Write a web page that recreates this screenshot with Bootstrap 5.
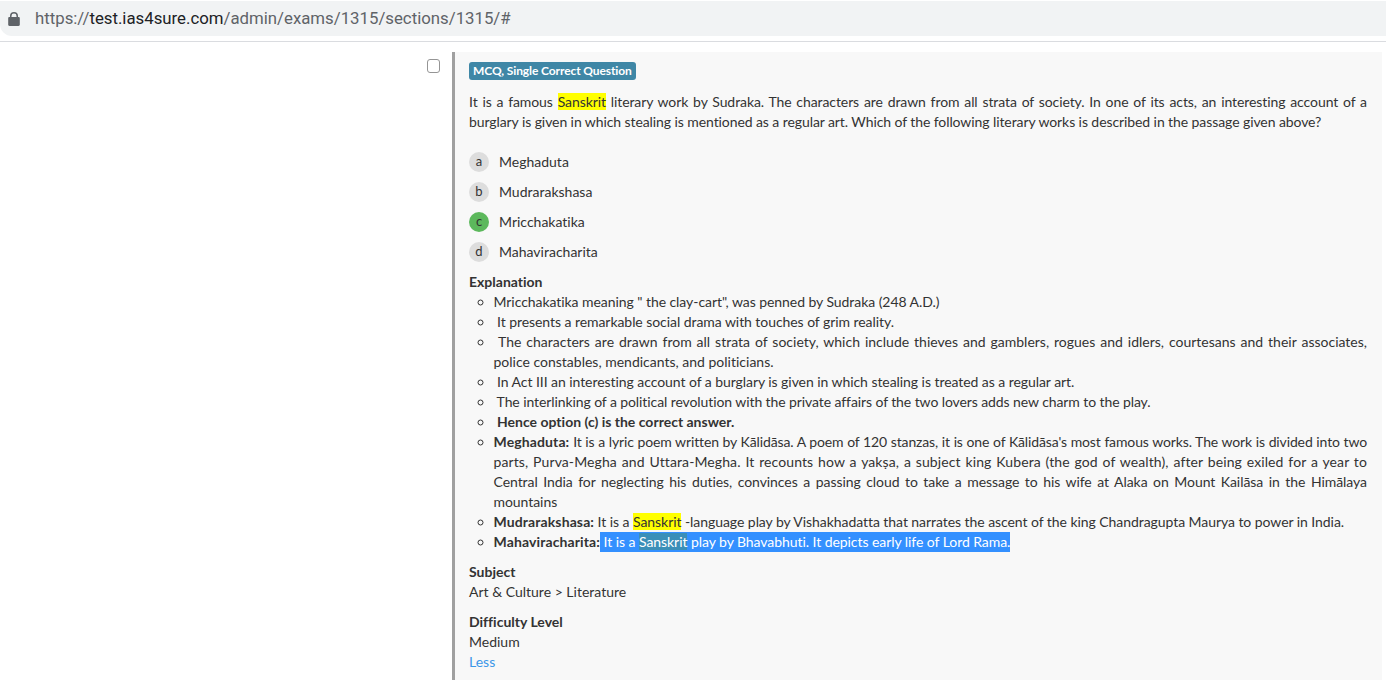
<!DOCTYPE html>
<html lang="en">
<head>
<meta charset="utf-8">
<title>Question</title>
<link rel="stylesheet" href="https://cdn.jsdelivr.net/npm/bootstrap@5.3.0/dist/css/bootstrap.min.css">
<style>
html, body { height: 680px; overflow: hidden; background: #fff; }
body { font-family: Lato, "Liberation Sans", sans-serif; font-size: 14px; line-height: 20px; color: #333; font-variant-ligatures: none; }
.url-bar { height: 35px; margin-top: 1px; background: #f1f3f4; border-radius: 0 0 0 12px; padding-left: 8px; margin-bottom: 5px; }
.url-text { font-family: Roboto, "Liberation Sans", sans-serif; font-size: 16.8px; color: #5f6368; margin-left: 15px; line-height: 35px; }
.url-host { color: #202124; }
.url-rule { height: 1px; background: #dadce0; }
.stage { padding-top: 10px; padding-right: 4px; }
.check-col { width: 452px; flex: none; }
.fake-check { width: 13px; height: 14px; border: 1.5px solid #959595; border-radius: 3px; background: #fff; margin: 7px 12px 0 0; }
.panel-q { background: #f8f8f8; border-left: 3px solid #a0a0a0; flex: 1; padding: 10px 15px 10px 14px; height: 640px; }
.tag-q { background: #3f87a6; color: #fff; font-weight: 700; font-size: 12px; line-height: 18px; height: 18px; border-radius: 3px; padding: 0 4px; display: block; width: fit-content; letter-spacing: -.1px; }
.stem { text-align: justify; margin: 12px 0 20px; letter-spacing: -.085px; }
.opt { height: 30px; }
.opt-dot { width: 20px; height: 20px; border-radius: 50%; background: #ddd; font-size: 13px; text-align: center; line-height: 19px; margin-right: 10px; }
.opt-ok { background: #5cb85c; }
.expl { margin: 0 0 10px; padding-left: 24.5px; list-style: circle; text-align: justify; letter-spacing: -.06px; }
.expl strong { letter-spacing: 0; }
.expl .lbl { letter-spacing: .12px; }
.expl .li-wide { letter-spacing: 0; }
.expl .li-tight { letter-spacing: -.13px; }
.expl .li-snug { letter-spacing: -.09px; }
.expl .li-loose { letter-spacing: .1px; }
.hl { background: #ff0; }
.sel { background: #3390ff; color: #fff; display: inline-block; height: 20px; }
.sel-y { background: #3b8fb8; }
.group-head { font-weight: 700; }
.group-block { margin-bottom: 10px; }
.less-link { color: #3c97e8; text-decoration: none; }
</style>
</head>
<body>
<div class="url-bar d-flex align-items-center">
  <svg width="12" height="14" viewBox="0 0 12 14" aria-hidden="true"><path fill="#5f6368" d="M2 5V3.900a4 3.900 0 0 1 8 0V5h.5c.8 0 1.300.5 1.300 1.200v6.500c0 .7-.5 1.200-1.300 1.200h-9C.7 13.900.2 13.400.2 12.700V6.200C.2 5.500.7 5 1.500 5zm1.500 0h5V3.900a2.500 2.400 0 0 0-5 0z"/></svg>
  <span class="url-text">https://<span class="url-host">test.ias4sure.com</span>/admin/exams/1315/sections/1315/#</span>
</div>
<div class="url-rule"></div>
<div class="stage d-flex">
  <div class="check-col d-flex justify-content-end align-items-start"><div class="fake-check"></div></div>
  <div class="panel-q">
    <span class="tag-q">MCQ, Single Correct Question</span>
    <p class="stem">It is a famous <span class="hl">Sanskrit</span> literary work by Sudraka. The characters are drawn from all strata of society. In one of its acts, an interesting account of a burglary is given in which stealing is mentioned as a regular art. Which of the following literary works is described in the passage given above?</p>
    <div class="opt d-flex align-items-start"><span class="opt-dot">a</span><span>Meghaduta</span></div>
    <div class="opt d-flex align-items-start"><span class="opt-dot">b</span><span>Mudrarakshasa</span></div>
    <div class="opt d-flex align-items-start"><span class="opt-dot opt-ok">c</span><span>Mricchakatika</span></div>
    <div class="opt d-flex align-items-start"><span class="opt-dot">d</span><span>Mahaviracharita</span></div>
    <div class="group-head">Explanation</div>
    <ul class="expl">
      <li>Mricchakatika meaning " the clay-cart", was penned by Sudraka (248 A.D.)</li>
      <li>&nbsp;It presents a remarkable social drama with touches of grim reality.</li>
      <li class="li-wide">&nbsp;The characters are drawn from all strata of society, which include thieves and gamblers, rogues and idlers, courtesans and their associates, police constables, mendicants, and politicians.</li>
      <li>&nbsp;In Act III an interesting account of a burglary is given in which stealing is treated as a regular art.</li>
      <li class="li-snug">&nbsp;The interlinking of a political revolution with the private affairs of the two lovers adds new charm to the play.</li>
      <li>&nbsp;<strong>Hence option (c) is the correct answer.</strong></li>
      <li><strong class="lbl">Meghaduta:</strong> <span class="li-tight">It is a lyric poem written by Kālidāsa. A poem of 120 stanzas, it is one of Kālidāsa's most famous works. The work is divided into two</span> <span class="li-loose">parts, Purva-Megha and Uttara-Megha. It recounts how a yakṣa, a subject king Kubera (the god of wealth), after being exiled for a year to</span> Central India for neglecting his duties, convinces a passing cloud to take a message to his wife at Alaka on Mount Kailāsa in the Himālaya mountains</li>
      <li><strong class="lbl">Mudrarakshasa:</strong> It is a <span class="hl">Sanskrit</span> -language play by Vishakhadatta that narrates the ascent of the king Chandragupta Maurya to power in India.</li>
      <li><strong class="lbl">Mahaviracharita:</strong><span class="sel">&nbsp;It is a <span class="sel-y">Sanskrit</span> play by Bhavabhuti. It depicts early life of Lord Rama.</span></li>
    </ul>
    <div class="group-block"><div class="group-head">Subject</div><div>Art &amp; Culture &gt; Literature</div></div>
    <div><div class="group-head">Difficulty Level</div><div>Medium</div><a class="less-link" href="#">Less</a></div>
  </div>
</div>
<script src="https://cdn.jsdelivr.net/npm/bootstrap@5.3.0/dist/js/bootstrap.bundle.min.js"></script>
</body>
</html>
